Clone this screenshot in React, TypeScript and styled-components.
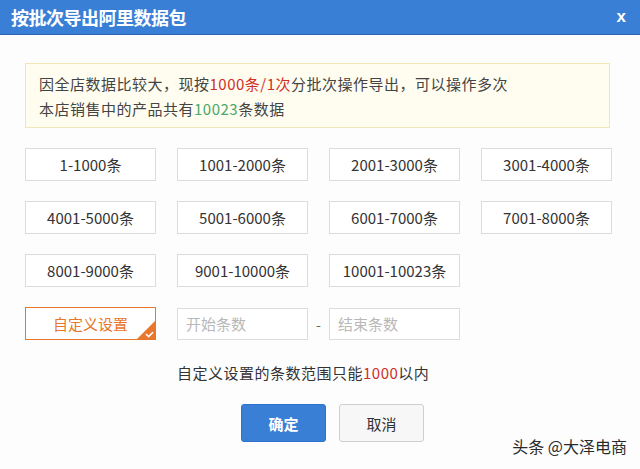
import React from 'react'
import styled, { createGlobalStyle } from 'styled-components'

const GlobalStyle = createGlobalStyle`
  html, body {
    margin: 0;
    padding: 0;
    background: #fdfdfd;
  }
  body {
    font-family: "Noto Sans CJK SC", "Liberation Sans", sans-serif;
    color: #333;
  }
`

const Dialog = styled.div`
  position: relative;
  width: 640px;
  height: 469px;
  background: #fdfdfd;
  overflow: hidden;
`

const Header = styled.div`
  height: 34px;
  display: flex;
  align-items: center;
  justify-content: space-between;
  padding: 0 14px 0 11px;
  background: #3a7fd6;
  border-bottom: 1px solid #2b63b0;
`

const Title = styled.h1`
  margin: 0;
  font-size: 18px;
  font-weight: bold;
  color: #fff;
  letter-spacing: -0.5px;
`

const CloseBtn = styled.span`
  font-family: "Liberation Sans", sans-serif;
  font-size: 17px;
  font-weight: bold;
  color: #fff;
  cursor: pointer;
`

const Body = styled.div`
  padding: 28px 30px 0 25px;
`

const Notice = styled.div`
  height: 50px;
  padding: 7px 13px 6px;
  background: #fffdf0;
  border: 1px solid #f2e6b6;
  font-size: 15px;
  line-height: 25px;
  letter-spacing: 0.5px;
  color: #444;
`

const Red = styled.span`
  color: #d0302a;
`

const Green = styled.span`
  color: #4aa86a;
`

const RangeGrid = styled.div`
  margin-top: 20px;
  display: grid;
  grid-template-columns: repeat(4, 131px);
  grid-auto-rows: 33px;
  column-gap: 21px;
  row-gap: 20px;
`

const RangeButton = styled.button<{ $active?: boolean }>`
  position: relative;
  box-sizing: border-box;
  width: 131px;
  height: 33px;
  padding: 0;
  flex-shrink: 0;
  background: #fff;
  border: 1px solid ${(p) => (p.$active ? '#e8762c' : '#dcdcdc')};
  font-family: inherit;
  font-size: 15px;
  color: ${(p) => (p.$active ? '#e8762c' : '#333')};
  cursor: pointer;
  overflow: hidden;
`

const Corner = styled.span`
  position: absolute;
  right: 0;
  bottom: 0;
  width: 0;
  height: 0;
  border-style: solid;
  border-width: 0 0 18px 18px;
  border-color: transparent transparent #e8762c transparent;
`

const CornerCheck = styled.svg`
  position: absolute;
  right: 1px;
  bottom: 1px;
`

const CustomRow = styled.div`
  margin-top: 20px;
  display: flex;
  align-items: center;
`

const RangeInputs = styled.div`
  margin-left: 21px;
  display: flex;
  align-items: center;
`

const Dash = styled.span`
  width: 21px;
  flex-shrink: 0;
  text-align: center;
  font-size: 14px;
  color: #666;
`

const RangeInput = styled.input`
  box-sizing: border-box;
  flex-shrink: 0;
  width: 131px;
  height: 32px;
  padding: 0 8px;
  border: 1px solid #dcdcdc;
  background: #fff;
  font-family: inherit;
  font-size: 15px;
  color: #333;
  outline: none;
  &::placeholder {
    color: #b8b8b8;
  }
`

const Hint = styled.p`
  margin: 24px 0 0 152px;
  font-size: 15px;
  line-height: 18px;
  letter-spacing: 0.5px;
  color: #333;
`

const Actions = styled.div`
  margin: 22px 0 0 216px;
  display: flex;
  gap: 13px;
`

const ActionButton = styled.button<{ $primary?: boolean }>`
  width: 85px;
  height: 38px;
  border-radius: 3px;
  border: 1px solid ${(p) => (p.$primary ? '#2f72cc' : '#cfcfcf')};
  background: ${(p) => (p.$primary ? '#3a7fd6' : '#f7f7f7')};
  color: ${(p) => (p.$primary ? '#fff' : '#333')};
  font-family: inherit;
  font-size: 15px;
  font-weight: ${(p) => (p.$primary ? 'bold' : 'normal')};
  cursor: pointer;
`

const Watermark = styled.div`
  position: absolute;
  right: 13px;
  bottom: 11px;
  font-size: 16px;
  color: #2a2a2a;
  text-shadow: 0 0 2px #fff;
`

const ranges = [
  '1-1000条',
  '1001-2000条',
  '2001-3000条',
  '3001-4000条',
  '4001-5000条',
  '5001-6000条',
  '6001-7000条',
  '7001-8000条',
  '8001-9000条',
  '9001-10000条',
  '10001-10023条',
]

export default function App() {
  return (
    <Dialog>
      <GlobalStyle />
      <Header>
        <Title>按批次导出阿里数据包</Title>
        <CloseBtn>x</CloseBtn>
      </Header>

      <Body>
        {/* 提示 */}
        <Notice>
          <div>
            因全店数据比较大，现按<Red>1000条/1次</Red>分批次操作导出，可以操作多次
          </div>
          <div>
            本店销售中的产品共有<Green>10023</Green>条数据
          </div>
        </Notice>

        <RangeGrid>
          {ranges.map((r) => (
            <RangeButton key={r}>{r}</RangeButton>
          ))}
        </RangeGrid>

        {/* 自定义设置 */}
        <CustomRow>
          <RangeButton $active>
            自定义设置
            <Corner />
            <CornerCheck width="9" height="7" viewBox="0 0 9 7">
              <path d="M1 3.2 L3.6 5.6 L8 1.2" fill="none" stroke="#fff" strokeWidth="1.6" />
            </CornerCheck>
          </RangeButton>
          <RangeInputs>
            <RangeInput placeholder="开始条数" />
            <Dash>-</Dash>
            <RangeInput placeholder="结束条数" />
          </RangeInputs>
        </CustomRow>

        <Hint>
          自定义设置的条数范围只能<Red>1000</Red>以内
        </Hint>

        <Actions>
          <ActionButton $primary>确定</ActionButton>
          <ActionButton>取消</ActionButton>
        </Actions>
      </Body>

      <Watermark>头条 @大泽电商</Watermark>
    </Dialog>
  )
}
